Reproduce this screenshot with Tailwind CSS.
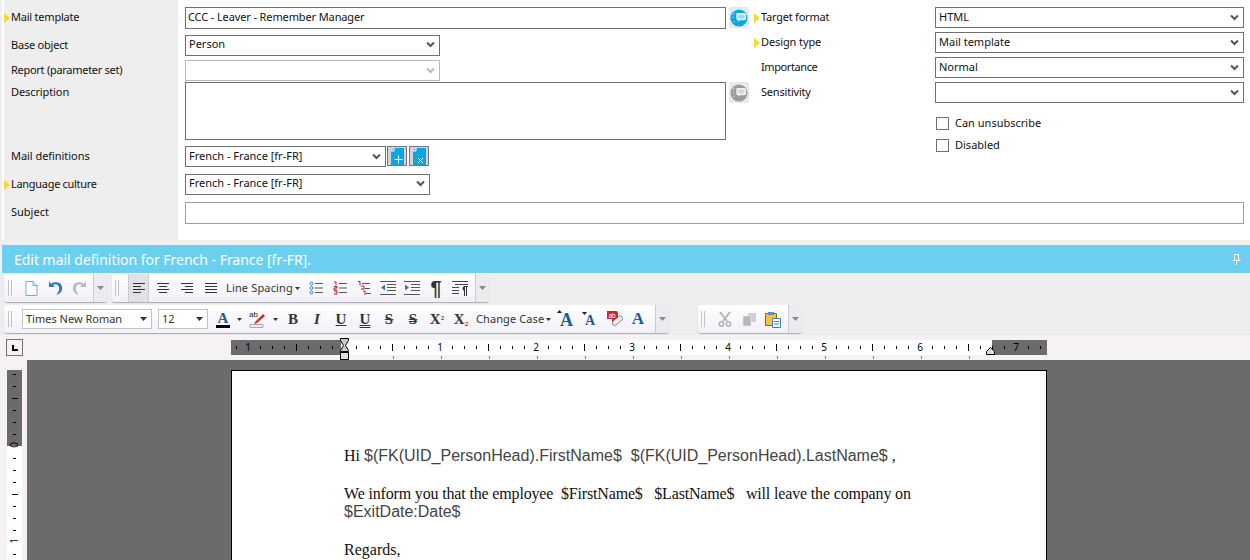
<!DOCTYPE html>
<html lang="en">
<head>
  <meta charset="UTF-8" />
  <title>Mail template</title>
  <script src="https://cdn.jsdelivr.net/npm/@tailwindcss/browser@4"></script>
</head>
<body class="bg-white">
<svg width="0" height="0" class="absolute">
  <symbol id="chev" viewBox="0 0 9 7"><path d="M1 1.500 4.500 5 8 1.500" fill="none" stroke="currentColor" stroke-width="2"/></symbol>
  <symbol id="tri" viewBox="0 0 6 10"><path d="M0 0 6 5 0 10Z" fill="#f6d92a"/></symbol>
  <symbol id="globe" viewBox="0 0 20 20"><circle cx="10" cy="10.500" r="9.500" fill="currentColor"/><path d="M8 5h8q2 0 2 2v4q0 2-2 2h-5l-2 2v-2q-2 0-2-2V6q0-1 1-1Z" fill="#fff" opacity=".85"/><path d="M9 7h7v4H9Z" fill="currentColor" opacity=".3"/><path d="M3 7l2-2M3 10h1M4 14l1 1" stroke="#fff"/></symbol>
  <symbol id="arrow" viewBox="0 0 7 4"><path d="M0 0h7L3.500 4Z" fill="currentColor"/></symbol>
</svg>

<div class="w-[1250px] h-[560px] overflow-hidden flex flex-col font-['Noto_Sans',sans-serif] text-[11px] text-[#111]">

  <!-- form -->
  <div class="h-[240px] flex flex-col shrink-0 border-l-2 border-[#f1eef1]">
    <div class="flex">
      <div class="w-[747px] shrink-0">
        <div class="flex h-[32px]">
          <div class="ml-[2px] w-[174px] bg-[#eeeeee] flex items-start pt-[9px]"><svg class="w-[6px] h-[10px] mt-[4px] mr-[1px]"><use href="#tri"/></svg><span class="leading-[16px] tracking-[-.22px]">Mail template</span></div>
          <div class="ml-[7px] mt-[7px] w-[541px] h-[22px] border border-[#707070] px-[2px] leading-[17px] tracking-[-.12px]">CCC - Leaver - Remember Manager</div>
          <div class="ml-[3px] mt-[7px] w-[20px] h-[21px] bg-[#e9e9e9] rounded-[2px] text-[#0aa6e2] p-[1px]"><svg class="w-[18px] h-[19px]"><use href="#globe"/></svg></div>
        </div>
        <div class="flex h-[26px]">
          <div class="ml-[2px] w-[174px] bg-[#eeeeee] pl-[7px] pt-[5px] leading-[16px] tracking-[-.22px]">Base object</div>
          <div class="ml-[7px] mt-[3px] w-[255px] h-[21px] border border-[#707070] px-[3px] pb-[2px] flex justify-between items-center"><span>Person</span><svg class="w-[9px] h-[7px] mr-[1px] text-[#555]"><use href="#chev"/></svg></div>
        </div>
        <div class="flex h-[24px]">
          <div class="ml-[2px] w-[174px] bg-[#eeeeee] pl-[7px] pt-[4px] leading-[16px] tracking-[-.28px]">Report (parameter set)</div>
          <div class="ml-[7px] mt-[2px] w-[255px] h-[21px] border border-[#bbbbbb] px-[3px] flex justify-end items-center"><svg class="w-[9px] h-[7px] mr-[1px] text-[#bbb]"><use href="#chev"/></svg></div>
        </div>
        <div class="flex h-[64px]">
          <div class="ml-[2px] w-[174px] bg-[#eeeeee] pl-[7px] pt-[2px] leading-[16px] tracking-[-.1px]">Description</div>
          <div class="ml-[7px] w-[541px] h-[58px] border border-[#707070]"></div>
          <div class="ml-[3px] w-[20px] h-[21px] bg-[#e9e9e9] rounded-[2px] text-[#9b9b9b] p-[1px]"><svg class="w-[18px] h-[19px]"><use href="#globe"/></svg></div>
        </div>
        <div class="flex h-[28px]">
          <div class="ml-[2px] w-[174px] bg-[#eeeeee] pl-[7px] pt-[2px] leading-[16px] tracking-[-.05px]">Mail definitions</div>
          <div class="ml-[7px] w-[201px] h-[21px] border border-[#707070] px-[3px] flex justify-between items-center"><span>French - France [fr-FR]</span><svg class="w-[9px] h-[7px] mr-[1px] text-[#555]"><use href="#chev"/></svg></div>
          <div class="ml-[1px] w-[20px] h-[20px] border border-[#777] bg-[#d4d4d4] flex items-center justify-center"><svg width="13" height="17" viewBox="0 0 13 17"><path d="M3 0h10v17H0V3Z" fill="#0aa6e2"/><path d="M3 0v3H0" fill="none" stroke="#fff"/><path d="M3.500 11.500h8M7.500 7.500v8" stroke="#fff"/></svg></div>
          <div class="ml-[2px] w-[20px] h-[20px] border border-[#777] bg-[#d4d4d4] flex items-center justify-center"><svg width="13" height="17" viewBox="0 0 13 17"><path d="M3 0h10v17H0V3Z" fill="#0aa6e2"/><path d="M3 0v3H0" fill="none" stroke="#fff"/><path d="M5 10l5 5M10 10l-5 5" stroke="#fff"/></svg></div>
        </div>
        <div class="flex h-[28px]">
          <div class="ml-[2px] w-[174px] bg-[#eeeeee] flex items-start pt-[2px]"><svg class="w-[6px] h-[10px] mt-[4px] mr-[1px]"><use href="#tri"/></svg><span class="leading-[16px] tracking-[-.3px]">Language culture</span></div>
          <div class="ml-[7px] w-[245px] h-[21px] border border-[#707070] px-[3px] pb-[2px] flex justify-between items-center"><span>French - France [fr-FR]</span><svg class="w-[9px] h-[7px] mr-[1px] text-[#555]"><use href="#chev"/></svg></div>
        </div>
      </div>

      <div class="ml-[5px] w-[490px] flex flex-col pt-[7px]">
        <div class="flex h-[25px]">
          <div class="w-[181px] flex items-start"><svg class="w-[6px] h-[10px] mt-[6px] mr-[1px]"><use href="#tri"/></svg><span class="leading-[20px] tracking-[-.22px]">Target format</span></div>
          <div class="w-[309px] h-[21px] border border-[#707070] px-[3px] flex justify-between items-center"><span>HTML</span><svg class="w-[9px] h-[7px] mr-[1px] text-[#555]"><use href="#chev"/></svg></div>
        </div>
        <div class="flex h-[25px]">
          <div class="w-[181px] flex items-start"><svg class="w-[6px] h-[10px] mt-[6px] mr-[1px]"><use href="#tri"/></svg><span class="leading-[20px] tracking-[-.1px]">Design type</span></div>
          <div class="w-[309px] h-[21px] border border-[#707070] px-[3px] flex justify-between items-center"><span>Mail template</span><svg class="w-[9px] h-[7px] mr-[1px] text-[#555]"><use href="#chev"/></svg></div>
        </div>
        <div class="flex h-[25px]">
          <div class="w-[181px] pl-[7px] leading-[20px] tracking-[-.4px]">Importance</div>
          <div class="w-[309px] h-[21px] border border-[#707070] px-[3px] flex justify-between items-center"><span>Normal</span><svg class="w-[9px] h-[7px] mr-[1px] text-[#555]"><use href="#chev"/></svg></div>
        </div>
        <div class="flex h-[35px]">
          <div class="w-[181px] pl-[7px] leading-[20px] tracking-[-.2px]">Sensitivity</div>
          <div class="w-[309px] h-[21px] border border-[#707070] px-[3px] flex justify-end items-center"><svg class="w-[9px] h-[7px] mr-[1px] text-[#555]"><use href="#chev"/></svg></div>
        </div>
        <div class="flex items-center h-[13px] ml-[182px] mb-[9px]"><span class="w-[13px] h-[13px] border border-[#707070]"></span><span class="ml-[6px]">Can unsubscribe</span></div>
        <div class="flex items-center h-[13px] ml-[182px]"><span class="w-[13px] h-[13px] border border-[#707070]"></span><span class="ml-[6px]">Disabled</span></div>
      </div>
    </div>
    <div class="flex h-[41px]">
      <div class="ml-[2px] w-[174px] bg-[#eeeeee] pl-[7px] pt-[2px] leading-[16px]">Subject</div>
      <div class="ml-[7px] w-[1059px] h-[22px] border border-[#a0a0a0]"></div>
    </div>
  </div>

  <div class="h-[5px] bg-[#f1eef1] shrink-0"></div>

  <!-- title bar -->
  <div class="h-[28px] pl-[2px] bg-[#f1eef1] shrink-0">
    <div class="h-full bg-[#6bcff0] text-white flex items-center justify-between pl-[12px] pr-[9px]">
      <span class="text-[14px] tracking-[-.02px]">Edit mail definition for French - France [fr-FR].</span>
      <svg width="9" height="11" viewBox="0 0 9 11"><path d="M2 .5h5M2.500 1v5M6.500 1v5M.5 6.500h8M4.500 7v4" stroke="#fff" fill="none"/></svg>
    </div>
  </div>

  <!-- toolbars -->
  <div class="h-[62px] bg-[#eeeeee] shrink-0 pt-[1px] text-[11px] text-[#333]">
    <div class="flex h-[28px] pl-[4px] gap-[5px]">
      <div class="w-[103px] flex rounded-[3px] bg-gradient-to-b from-white to-[#f1f0f8] shadow-[0_1px_1px_#aaa]">
        <div class="w-[15px] pl-[4px] flex items-center"><span class="w-[4px] h-[16px] border-x border-[#c4c4c4]"></span></div>
        <div class="w-[24px] flex items-center justify-center"><svg width="13" height="15" viewBox="0 0 13 15"><path d="M1 .5h7l4 4v10H1Z" fill="#fff" stroke="#7aa7d6"/><path d="M8 .5v4h4" fill="#dbe8f6" stroke="#7aa7d6"/></svg></div>
        <div class="w-[24px] flex items-center justify-center"><svg width="15" height="16" viewBox="0 0 15 16"><path d="M1 1v6h6L5 5q5-2 6 2t-3 8q7-2 6-8T5 2.500L3 4Z" fill="#2f76c4"/></svg></div>
        <div class="w-[24px] flex items-center justify-center"><svg width="15" height="16" viewBox="0 0 15 16"><path d="M14 1v6H8l2-2Q5 3 4 7t3 8Q0 13 1 7t9-4.500L12 4Z" fill="#b9b9b9"/></svg></div>
        <div class="w-[14px] ml-auto border-l border-[#ccc] flex items-center justify-center bg-[#ebebf0] rounded-r-[3px] text-[#888]"><svg class="w-[7px] h-[4px]"><use href="#arrow"/></svg></div>
      </div>
      <div class="w-[377px] flex rounded-[3px] bg-gradient-to-b from-white to-[#f1f0f8] shadow-[0_1px_1px_#aaa]">
        <div class="w-[16px] pl-[3px] flex items-center"><span class="w-[4px] h-[16px] border-x border-[#c4c4c4]"></span></div>
        <div class="w-[21px] mr-[2px] flex items-center justify-center bg-[#e2e2e6] border-x border-[#ccc]"><svg width="14" height="12" viewBox="0 0 14 12"><path d="M1 1.500h12M1 4.500h8M1 7.500h12M1 10.500h8" stroke="#333" fill="none"/></svg></div>
        <div class="w-[24px] flex items-center justify-center"><svg width="14" height="12" viewBox="0 0 14 12"><path d="M1 1.500h12M3 4.500h8M1 7.500h12M3 10.500h8" stroke="#333" fill="none"/></svg></div>
        <div class="w-[24px] flex items-center justify-center"><svg width="14" height="12" viewBox="0 0 14 12"><path d="M1 1.500h12M5 4.500h8M1 7.500h12M5 10.500h8" stroke="#333" fill="none"/></svg></div>
        <div class="w-[24px] flex items-center justify-center"><svg width="14" height="12" viewBox="0 0 14 12"><path d="M1 1.500h12M1 4.500h12M1 7.500h12M1 10.500h12" stroke="#333" fill="none"/></svg></div>
        <div class="w-[81px] pl-[3px] flex items-center whitespace-nowrap"><span class="tracking-[.15px]">Line Spacing</span><svg class="w-[5px] h-[3px] ml-[2px]"><use href="#arrow"/></svg></div>
        <div class="w-[24px] flex items-center justify-center"><svg width="14" height="14" viewBox="0 0 14 14"><path d="M6 2.500h8M6 7h8M6 11.500h8" stroke="#555"/><circle cx="2.500" cy="2.500" r="1.500" fill="none" stroke="#3a7cc4"/><circle cx="2.500" cy="7" r="1.500" fill="none" stroke="#3a7cc4"/><circle cx="2.500" cy="11.500" r="1.500" fill="none" stroke="#3a7cc4"/></svg></div>
        <div class="w-[24px] flex items-center justify-center"><svg width="14" height="14" viewBox="0 0 14 14"><path d="M6 2.500h8M6 7h8M6 11.500h8" stroke="#555"/><path d="M1 1h2v3M1 5.500h3v1.500H1v2h3M1 10h3v3H1" stroke="#c01818" fill="none"/></svg></div>
        <div class="w-[24px] flex items-center justify-center"><svg width="14" height="15" viewBox="0 0 14 15"><path d="M5 2.500h8M8 7.500h5M9 12.500h5" stroke="#555"/><path d="M1 .5h2v4M4 5h3v3H4M6 10h2v4" stroke="#c01818" fill="none"/></svg></div>
        <div class="w-[24px] flex items-center justify-center"><svg width="16" height="14" viewBox="0 0 16 14"><path d="M0 .5h16M7 3.500h9M7 6.500h9M7 9.500h9M0 13.500h16" stroke="#555"/><path d="M1 6.500 5 3.500v6Z" fill="#2f76c4"/></svg></div>
        <div class="w-[24px] flex items-center justify-center"><svg width="16" height="14" viewBox="0 0 16 14"><path d="M0 .5h16M7 3.500h9M7 6.500h9M7 9.500h9M0 13.500h16" stroke="#555"/><path d="M5 6.500 1 3.500v6Z" fill="#2f76c4"/></svg></div>
        <div class="w-[24px] flex items-center justify-center text-[20px] font-bold text-[#333] font-['Liberation_Sans',sans-serif]">¶</div>
        <div class="w-[24px] flex items-center justify-center"><svg width="16" height="15" viewBox="0 0 16 15"><path d="M0 .5h16M3 3.500h13M0 6.500h7M0 9.500h7M0 12.500h7" stroke="#444"/><path d="M9 5h7v1h-1v9h-1V6h-1v9h-1v-5q-3-2.500 0-5Z" fill="#333"/></svg></div>
        <div class="w-[14px] ml-auto border-l border-[#ccc] flex items-center justify-center bg-[#ebebf0] rounded-r-[3px] text-[#888]"><svg class="w-[7px] h-[4px]"><use href="#arrow"/></svg></div>
      </div>
    </div>

    <div class="flex h-[28px] pl-[4px] mt-[3px]">
      <div class="w-[665px] flex items-center rounded-[3px] bg-gradient-to-b from-white to-[#f1f0f8] shadow-[0_1px_1px_#aaa]">
        <div class="w-[18px] pl-[4px] flex items-center"><span class="w-[4px] h-[16px] border-x border-[#c4c4c4]"></span></div>
        <div class="w-[130px] h-[20px] border border-[#c4c4c4] bg-white pl-[3px] pr-[4px] flex items-center justify-between"><span>Times New Roman</span><svg class="w-[7px] h-[4px] text-[#333]"><use href="#arrow"/></svg></div>
        <div class="ml-[6px] w-[50px] h-[20px] border border-[#c4c4c4] bg-white pl-[3px] pr-[4px] flex items-center justify-between"><span>12</span><svg class="w-[7px] h-[4px] text-[#333]"><use href="#arrow"/></svg></div>
        <div class="ml-[3px] w-[24px] flex items-center justify-center relative h-[20px]"><span class="font-['Liberation_Serif',serif] font-bold text-[15px] leading-[14px] text-[#1c5a96] border-b-[3px] border-black px-[2px]">A</span></div>
        <div class="w-[10px] -ml-[1px] flex justify-center text-[#333]"><svg class="w-[5px] h-[3px]"><use href="#arrow"/></svg></div>
        <div class="ml-[1px] w-[24px] flex items-center justify-center"><svg width="17" height="19" viewBox="0 0 17 19"><text x="0" y="7" font-size="8" fill="#222" font-family="Liberation Sans">ab</text><path d="M6 12 14 4l2 2-8 7-3 1Z" fill="#d42a2a"/><path d="M1 14.500h13v3H1Z" fill="#eee" stroke="#aaa"/></svg></div>
        <div class="w-[10px] ml-[1px] flex justify-center text-[#333]"><svg class="w-[5px] h-[3px]"><use href="#arrow"/></svg></div>
        <div class="w-[24px] ml-[1px] text-center font-['Liberation_Serif',serif] font-bold text-[15px]">B</div>
        <div class="w-[24px] text-center font-['Liberation_Serif',serif] italic font-bold text-[15px]">I</div>
        <div class="w-[24px] text-center font-['Liberation_Serif',serif] font-bold text-[15px]"><span class="underline">U</span></div>
        <div class="w-[24px] text-center font-['Liberation_Serif',serif] font-bold text-[15px]"><span class="underline decoration-double">U</span></div>
        <div class="w-[24px] text-center font-['Liberation_Serif',serif] font-bold text-[15px]"><span class="line-through">S</span></div>
        <div class="w-[24px] text-center font-['Liberation_Serif',serif] font-bold text-[15px]"><span class="line-through decoration-double">S</span></div>
        <div class="w-[24px] text-center font-['Liberation_Serif',serif] font-bold text-[15px]">X<sup class="text-[7px] text-[#c01818]">2</sup></div>
        <div class="w-[24px] text-center font-['Liberation_Serif',serif] font-bold text-[15px]">X<sub class="text-[7px] text-[#c01818]">2</sub></div>
        <div class="w-[81px] pl-[3px] flex items-center whitespace-nowrap"><span class="tracking-[.1px]">Change Case</span><svg class="w-[5px] h-[3px] ml-[2px]"><use href="#arrow"/></svg></div>
        <div class="w-[24px] flex justify-center"><svg width="19" height="18" viewBox="0 0 19 18"><path d="M0 3 2.500 0 5 3Z" fill="#222"/><text x="3" y="16" font-size="18" font-weight="700" fill="#1c5a96" font-family="Liberation Serif">A</text></svg></div>
        <div class="w-[24px] flex justify-center"><svg width="16" height="14" viewBox="0 0 16 14"><path d="M0 0H5L2.500 3Z" fill="#222"/><text x="3" y="13" font-size="14" font-weight="700" fill="#1c5a96" font-family="Liberation Serif">A</text></svg></div>
        <div class="w-[24px] flex justify-center"><svg width="17" height="16" viewBox="0 0 17 16"><path d="M7 10 13 5q2-1 3 1t0 3l-6 5q-2 1-3 0t0-4Z" fill="#eee" stroke="#888"/><path d="M1 0h9q2 0 2 2v4q0 1-1 1L6 11V8H1Z" fill="#c42a2a"/><text x="2.500" y="6.500" font-size="6.500" fill="#fff" font-family="Liberation Sans">ab</text></svg></div>
        <div class="w-[24px] text-center font-['Liberation_Serif',serif] font-bold text-[17px] text-[#1c5a96] leading-[20px]">A</div>
        <div class="w-[14px] h-full ml-auto border-l border-[#ccc] flex items-center justify-center bg-[#ebebf0] rounded-r-[3px] text-[#888]"><svg class="w-[7px] h-[4px]"><use href="#arrow"/></svg></div>
      </div>
      <div class="ml-[29px] w-[104px] flex rounded-[3px] bg-gradient-to-b from-white to-[#f1f0f8] shadow-[0_1px_1px_#aaa]">
        <div class="w-[15px] pl-[3px] flex items-center"><span class="w-[4px] h-[16px] border-x border-[#c4c4c4]"></span></div>
        <div class="w-[24px] flex items-center justify-center"><svg width="14" height="16" viewBox="0 0 14 16"><path d="M2 1l7 9M12 1l-7 9" stroke="#b4b4b4" stroke-width="2"/><circle cx="3.500" cy="13" r="2.200" fill="none" stroke="#b4b4b4" stroke-width="1.500"/><circle cx="10.500" cy="13" r="2.200" fill="none" stroke="#b4b4b4" stroke-width="1.500"/></svg></div>
        <div class="w-[24px] flex items-center justify-center"><svg width="14" height="15" viewBox="0 0 14 15"><path d="M6 1h8v9H6Z" fill="#d0d0d0"/><path d="M1 4h8v10H1Z" fill="#b8b8b8" stroke="#eee" stroke-width=".6"/></svg></div>
        <div class="w-[24px] flex items-center justify-center"><svg width="16" height="17" viewBox="0 0 16 17"><path d="M.5 2.500h11v12H.5Z" fill="#f3c53c" stroke="#8a6a16"/><path d="M3 1h6v3H3Z" fill="#5f8fc4"/><path d="M7.500 7.500h8v9h-8Z" fill="#fff" stroke="#3a7cc4"/><path d="M9 10.500h5M9 13h5" stroke="#3a7cc4"/></svg></div>
        <div class="w-[14px] ml-auto border-l border-[#ccc] flex items-center justify-center bg-[#ebebf0] rounded-r-[3px] text-[#888]"><svg class="w-[7px] h-[4px]"><use href="#arrow"/></svg></div>
      </div>
    </div>
  </div>

  <!-- horizontal ruler -->
  <div class="h-[25px] bg-[#f5f1f5] flex shrink-0">
    <div class="ml-[6px] mt-[4px] w-[17px] h-[17px] border border-[#707070] flex items-center justify-center"><svg width="6" height="6" viewBox="0 0 6 6"><path d="M0 0h2v4h4v2H0Z" fill="#000"/></svg></div>
    <svg id="hruler" class="ml-[208px]" width="816" height="25" viewBox="231 335 816 25"></svg>
  </div>

  <!-- editor -->
  <div class="flex-1 flex min-h-0">
    <div class="w-[27px] bg-[#f5f1f5] pt-[10px] pl-[7px] shrink-0">
      <svg id="vruler" class="block" width="15" height="190" viewBox="7 370 15 190"></svg>
    </div>
    <div class="flex-1 bg-[#6b6a6c] pt-[10px] pl-[204px]">
      <div class="w-[816px] h-[200px] bg-white border-x border-t border-black pl-[112px] pt-[75px] font-['Liberation_Serif',serif] text-[16px] text-[#111] leading-[19px]">
        <p class="mb-[19px] whitespace-pre">Hi <span class="font-['Liberation_Sans',sans-serif] text-[#444]">$(FK(UID_PersonHead).FirstName$  $(FK(UID_PersonHead).LastName$</span> ,</p>
        <p class="whitespace-pre tracking-[-.16px]">We inform you that the employee  $FirstName$   $LastName$   will leave the company on</p>
        <p class="mb-[19px] leading-[18px] font-['Liberation_Sans',sans-serif] text-[#444]">$ExitDate:Date$</p>
        <p>Regards,</p>
      </div>
    </div>
  </div>
</div>

<script>
  const NS = "http://www.w3.org/2000/svg";

  function add(svg, tag, attrs, text) {
    const el = document.createElementNS(NS, tag);
    Object.keys(attrs).forEach(k => el.setAttribute(k, attrs[k]));
    if (text) el.textContent = text;
    svg.appendChild(el);
  }

  // horizontal ruler, 96px to the inch, zero at x=344
  const h = document.getElementById("hruler");
  add(h, "rect", { x: 231, y: 340, width: 816, height: 15, fill: "#fff" });
  add(h, "rect", { x: 231, y: 340, width: 110, height: 15, fill: "#6b6a6c" });
  add(h, "rect", { x: 992, y: 340, width: 55, height: 15, fill: "#6b6a6c" });
  for (let i = -9; i <= 58; i++) {
    const x = 344 + i * 12;
    if (x < 233 || x > 1045) continue;
    if (i === 0) continue;
    if (i % 8 === 0) {
      add(h, "text", { x: x, y: 351, "font-size": 10, "text-anchor": "middle", "font-family": "Noto Sans", fill: "#000" }, String(Math.abs(i / 8)));
    } else if (i % 4 === 0) {
      add(h, "rect", { x: x, y: 344, width: 1, height: 7, fill: "#000" });
    } else {
      add(h, "rect", { x: x, y: 346, width: 1, height: 3, fill: "#000" });
    }
  }
  for (let x = 345; x < 992; x += 48) {
    add(h, "rect", { x: x, y: 356, width: 1, height: 3, fill: "#777" });
  }
  // indent markers
  add(h, "path", { d: "M340.500 338.500h8v2l-3 5 3 5v1h-8v-1l3-5-3-5Z", fill: "#c8c8c8", stroke: "#000" });
  add(h, "rect", { x: 340.5, y: 352.5, width: 8, height: 7, fill: "#ddd", stroke: "#000" });
  add(h, "path", { d: "M986.500 354.500v-3l4-4 4 4v3Z", fill: "#ddd", stroke: "#000" });

  // vertical ruler
  const v = document.getElementById("vruler");
  add(v, "rect", { x: 7, y: 370, width: 15, height: 190, fill: "#fff" });
  add(v, "rect", { x: 7, y: 370, width: 15, height: 76, fill: "#6b6a6c" });
  for (let i = -6; i <= 9; i++) {
    const y = 446 + i * 12;
    if (i === 0 || i === 8) {
      add(v, "text", { x: 0, y: 0, "font-size": 10, "text-anchor": "middle", "font-family": "Noto Sans", fill: "#000", transform: `translate(18 ${y - 1}) rotate(-90)` }, String(i / 8));
    } else if (i % 4 === 0) {
      add(v, "rect", { x: 12, y: y, width: 6, height: 1, fill: "#000" });
    } else {
      add(v, "rect", { x: 13, y: y, width: 3, height: 1, fill: "#000" });
    }
  }
</script>
</body>
</html>
